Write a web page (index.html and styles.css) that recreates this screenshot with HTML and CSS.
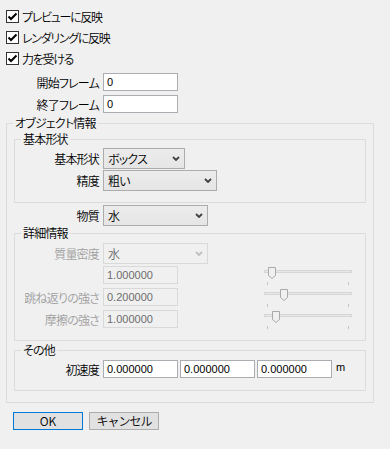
FILE: index.html
```html
<!DOCTYPE html>
<html lang="ja">
<head>
  <meta charset="UTF-8" />
  <meta name="viewport" content="width=device-width, initial-scale=1.0"/>
  <title>オブジェクト設定</title>
  <link rel="stylesheet" href="styles.css">
</head>
<body>
  <div class="dialog">
    <div class="checks">
      <label class="check"><span class="box"><svg width="11" height="11" viewBox="0 0 11 11"><path d="M1.5 5.5 L4 8 L9.5 2.5" fill="none" stroke="#000" stroke-width="2"/></svg></span>プレビューに反映</label>
      <label class="check"><span class="box"><svg width="11" height="11" viewBox="0 0 11 11"><path d="M1.5 5.5 L4 8 L9.5 2.5" fill="none" stroke="#000" stroke-width="2"/></svg></span>レンダリングに反映</label>
      <label class="check"><span class="box"><svg width="11" height="11" viewBox="0 0 11 11"><path d="M1.5 5.5 L4 8 L9.5 2.5" fill="none" stroke="#000" stroke-width="2"/></svg></span>力を受ける</label>
    </div>

    <div class="frames">
      <div class="row"><span class="lbl">開始フレーム</span><span class="field">0</span></div>
      <div class="row"><span class="lbl">終了フレーム</span><span class="field">0</span></div>
    </div>

    <fieldset class="group outer">
      <legend>オブジェクト情報</legend>

      <fieldset class="group inner shape">
        <legend>基本形状</legend>
        <div class="row">
          <span class="lbl">基本形状</span>
          <div class="combo combo-shape"><span>ボックス</span><svg class="chev" width="8" height="5" viewBox="0 0 8 5"><polyline points="1,1 4,4 7,1" fill="none" stroke="currentColor" stroke-width="1.8"/></svg></div>
        </div>
        <div class="row">
          <span class="lbl">精度</span>
          <div class="combo combo-quality"><span>粗い</span><svg class="chev" width="8" height="5" viewBox="0 0 8 5"><polyline points="1,1 4,4 7,1" fill="none" stroke="currentColor" stroke-width="1.8"/></svg></div>
        </div>
      </fieldset>

      <div class="row material">
        <span class="lbl">物質</span>
        <div class="combo combo-mat"><span>水</span><svg class="chev" width="8" height="5" viewBox="0 0 8 5"><polyline points="1,1 4,4 7,1" fill="none" stroke="currentColor" stroke-width="1.8"/></svg></div>
      </div>

      <fieldset class="group inner detail">
        <legend>詳細情報</legend>
        <div class="row">
          <span class="lbl">質量密度</span>
          <div class="combo combo-mat off"><span>水</span><svg class="chev" width="8" height="5" viewBox="0 0 8 5"><polyline points="1,1 4,4 7,1" fill="none" stroke="currentColor" stroke-width="1.8"/></svg></div>
        </div>
        <div class="row slide-row">
          <span class="lbl"></span><span class="field off">1.000000</span>
          <svg class="slider" width="90" height="22" viewBox="0 0 90 22">
            <rect x="1.5" y="6.5" width="87" height="2" fill="#e7e7e7" stroke="#d6d6d6"/>
            <path d="M4.5 18 V21 M85.5 18 V21" stroke="#c4c4c4"/>
            <path d="M5.5 3.5 H12.5 V11.5 L9 14.5 L5.5 11.5 Z" fill="#f0f0f0" stroke="#a9a9a9"/>
          </svg>
        </div>
        <div class="row slide-row">
          <span class="lbl">跳ね返りの強さ</span><span class="field off">0.200000</span>
          <svg class="slider" width="90" height="22" viewBox="0 0 90 22">
            <rect x="1.5" y="6.5" width="87" height="2" fill="#e7e7e7" stroke="#d6d6d6"/>
            <path d="M4.5 18 V21 M85.5 18 V21" stroke="#c4c4c4"/>
            <path d="M17.5 3.5 H24.5 V11.5 L21 14.5 L17.5 11.5 Z" fill="#f0f0f0" stroke="#a9a9a9"/>
          </svg>
        </div>
        <div class="row slide-row">
          <span class="lbl">摩擦の強さ</span><span class="field off">1.000000</span>
          <svg class="slider" width="90" height="22" viewBox="0 0 90 22">
            <rect x="1.5" y="6.5" width="87" height="2" fill="#e7e7e7" stroke="#d6d6d6"/>
            <path d="M4.5 18 V21 M85.5 18 V21" stroke="#c4c4c4"/>
            <path d="M9.5 3.5 H16.5 V11.5 L13 14.5 L9.5 11.5 Z" fill="#f0f0f0" stroke="#a9a9a9"/>
          </svg>
        </div>
      </fieldset>

      <fieldset class="group inner other">
        <legend>その他</legend>
        <div class="row">
          <span class="lbl">初速度</span>
          <span class="field">0.000000</span>
          <span class="field">0.000000</span>
          <span class="field">0.000000</span>
          <span class="unit">m</span>
        </div>
      </fieldset>
    </fieldset>

    <div class="buttons">
      <button type="button" class="btn default">OK</button>
      <button type="button" class="btn">キャンセル</button>
    </div>
  </div>
</body>
</html>
```

FILE: styles.css
```css
body {
  margin: 0;
  background: #f0f0f0;
  color: #000;
  font-family: "Noto Sans CJK JP", "Noto Sans", sans-serif;
  font-size: 12px;
  font-weight: 350;
  font-feature-settings: "palt";
  letter-spacing: -0.8px;
}

.dialog {
  width: 390px;
  height: 449px;
  padding-top: 6px;
  box-sizing: border-box;
}

/* checkboxes */
.checks {
  padding-left: 6px;
}

.check {
  display: flex;
  align-items: center;
  height: 21px;
  gap: 3px;
  letter-spacing: -1.3px;
}

.box {
  width: 11px;
  height: 11px;
  border: 1px solid #333;
  background: #fff;
  display: flex;
}

/* label + control rows */
.row {
  display: flex;
  align-items: center;
  height: 22px;
}

.lbl {
  flex: none;
  text-align: right;
  margin-right: 4px;
  white-space: nowrap;
}

.frames {
  margin-top: 2px;
}

.frames .lbl { width: 99px; }
.outer > .row .lbl { width: 92px; }
.inner .lbl { width: 84px; }

.field {
  flex: none;
  width: 75px;
  height: 18px;
  box-sizing: border-box;
  border: 1px solid #abadb3;
  background: #fff;
  padding-left: 3px;
  font-family: "Liberation Sans", Arial, sans-serif;
  font-size: 11px;
  font-weight: 400;
  letter-spacing: 0;
  line-height: 16px;
  color: #000;
}

.field.off {
  background: #f0f0f0;
  border-color: #d9d9d9;
  color: #6d6d6d;
}

.combo {
  flex: none;
  height: 21px;
  box-sizing: border-box;
  border: 1px solid #acacac;
  background: linear-gradient(#ececec, #e5e5e5);
  display: flex;
  align-items: center;
  justify-content: space-between;
  padding: 0 4px 0 4px;
  color: #404040;
}

.combo span { color: #000; }

.combo.off {
  background: #f0f0f0;
  border-color: #d9d9d9;
  color: #bfbfbf;
}

.combo.off span { color: #6d6d6d; }

.combo-shape { width: 82px; }
.combo-quality { width: 114px; }
.combo-mat { width: 105px; }

/* group boxes */
.group {
  margin: 0;
  padding: 0;
  border: 1px solid #dcdcdc;
  min-width: 0;
}

.group legend {
  padding: 0 2px;
  margin-left: 6px;
  line-height: 14px;
}

.outer {
  margin: 1px 16px 0 6px;
  padding-bottom: 11px;
}

.inner {
  margin: 2px 7px 0 7px;
}

.shape {
  padding: 2px 0 10px;
}

.shape .row {
  height: 21px;
  margin-bottom: 1px;
}

.material {
  margin-top: 2px;
  height: 21px;
}

.detail {
  margin-top: 0;
  padding: 3px 0 10px;
}

.detail legend + .row {
  height: 21px;
}

.detail .lbl { color: #a0a0a0; }

.slider {
  flex: none;
  margin-left: 85px;
}

.other {
  padding: 1px 0 10px;
}

.other .row { gap: 2px; }
.other .lbl { margin-right: 2px; }

.unit {
  font-family: "Liberation Sans", Arial, sans-serif;
  font-size: 11px;
  font-weight: 400;
  letter-spacing: 0;
  margin-left: 2px;
  margin-top: -4px;
}

/* buttons */
.buttons {
  display: flex;
  gap: 6px;
  padding-left: 13px;
  margin-top: 9px;
}

.btn {
  width: 70px;
  height: 18px;
  margin: 0;
  padding: 0;
  border: 1px solid #adadad;
  background: #e1e1e1;
  font-family: inherit;
  font-size: 12px;
  font-weight: 350;
  letter-spacing: -1px;
  line-height: 14px;
  color: #000;
}

.btn.default {
  border-color: #0078d7;
  letter-spacing: 0;
}
```
